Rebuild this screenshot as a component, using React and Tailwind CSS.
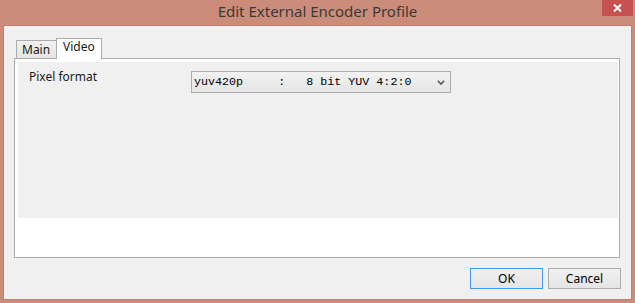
export default function App() {
  return (
    <div className="w-[635px] h-[303px] bg-[#cb8c7a] flex flex-col font-['Segoe_UI','Noto_Sans',sans-serif] text-[12px] text-[#1a1a1a] overflow-hidden">
      {/* title bar */}
      <div className="h-[25px] relative flex items-start justify-center shrink-0">
        <span className="text-[15px] leading-[22px] text-[#3a3a3a]">Edit External Encoder Profile</span>
        <div className="absolute right-[2px] top-0 w-[31px] h-[16px] bg-[#c75050] flex items-center justify-center">
          <svg width="9" height="8" viewBox="0 0 9 8">
            <path d="M1 0.5 L8 7.5 M8 0.5 L1 7.5" stroke="#fff" strokeWidth="2" />
          </svg>
        </div>
      </div>

      {/* client area */}
      <div className="mx-[3px] mb-[3px] flex-1 bg-[#f0f0f0] border border-[#b98272] flex flex-col">
        {/* tabs */}
        <div className="mt-[11px] ml-[12px] flex items-end h-[21px]">
          <div className="h-[18px] w-[41px] border border-b-0 border-[#acacac] bg-gradient-to-b from-[#f0f0f0] to-[#e5e5e5] pl-[5px] leading-[18px]">
            Main
          </div>
          <div className="relative z-10 -ml-px h-[21px] w-[46px] border border-b-0 border-[#acacac] bg-white pl-[6px] leading-[16px] -mb-px">
            Video
          </div>
        </div>

        {/* tab page */}
        <div className="ml-[10px] w-[606px] h-[200px] border border-[#acacac] bg-white pt-[3px] pl-[3px] pr-[1px]">
          <div className="h-[156px] bg-[#f0f0f0] flex items-start pl-[11px] pt-[9px]">
            <span className="w-[162px] -mt-[2px] leading-[16px]">Pixel format</span>
            <div className="w-[260px] h-[22px] border border-[#acacac] bg-gradient-to-b from-[#f2f2f2] to-[#e5e5e5] flex items-center justify-between pl-[2px] pr-[5px]">
              <span className="font-['Courier_New','Liberation_Mono',monospace] text-[11.7px] text-black whitespace-pre leading-[20px]">
                {"yuv420p     :   8 bit YUV 4:2:0"}
              </span>
              <svg width="8" height="5" viewBox="0 0 8 5">
                <path d="M0.8 0.8 L4 4 L7.2 0.8" fill="none" stroke="#555" strokeWidth="1.6" />
              </svg>
            </div>
          </div>
        </div>

        {/* buttons */}
        <div className="mt-[10px] mr-[10px] flex justify-end gap-[5px]">
          <button className="w-[73px] h-[21px] border border-[#3c9bf0] bg-gradient-to-b from-[#f0f0f0] to-[#e5e5e5] text-black leading-[18px]">
            OK
          </button>
          <button className="w-[73px] h-[21px] border border-[#acacac] bg-gradient-to-b from-[#f0f0f0] to-[#e5e5e5] text-black leading-[18px]">
            Cancel
          </button>
        </div>
      </div>
    </div>
  );
}
